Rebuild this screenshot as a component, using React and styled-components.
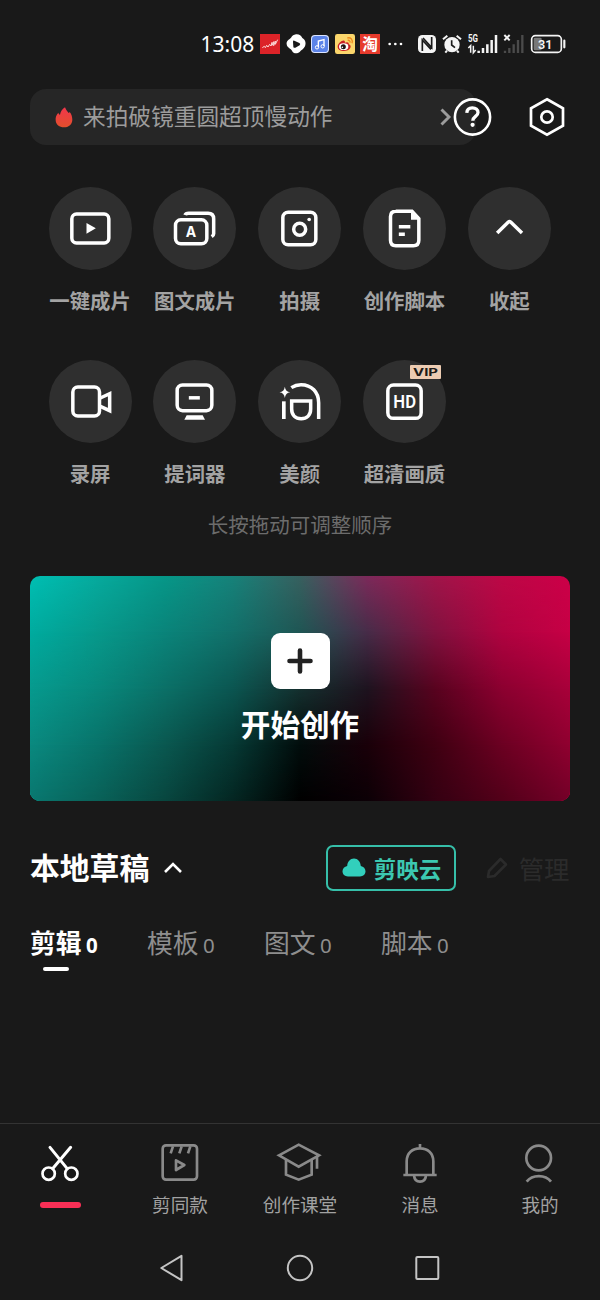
import React, { useState } from "react";
import styled, { createGlobalStyle } from "styled-components";

const GlobalStyle = createGlobalStyle`
  body {
    margin: 0;
    background: #191919;
    font-family: "Noto Sans CJK SC", "Noto Sans", sans-serif;
  }

  * {
    box-sizing: border-box;
  }

  svg {
    display: block;
    flex-shrink: 0;
    overflow: visible;
  }
`;

const Screen = styled.div`
  display: flex;
  flex-direction: column;
  width: 600px;
  height: 1300px;
  background: #191919;
  color: #fff;
  overflow: hidden;
`;

const StatusBar = styled.div`
  display: flex;
  align-items: center;
  gap: 5px;
  height: 89px;
  padding: 0 0 1px 200.5px;
`;

const Clock = styled.span`
  width: 54.5px;
  font-family: "Noto Sans", sans-serif;
  font-size: 21px;
  line-height: 30px;
  white-space: nowrap;
`;

const StatusGroup = styled.div`
  display: flex;
  align-items: center;
  gap: ${props => props.$gap}px;
  margin-left: ${props => props.$left || 0}px;
`;

const TopRow = styled.div`
  display: flex;
  align-items: center;
  height: 56px;
  padding-left: 30px;
`;

const SearchBar = styled.div`
  display: flex;
  align-items: center;
  width: 446px;
  height: 56px;
  padding: 0 24px 0 25px;
  border-radius: 16px;
  background: #262626;
`;

const SearchText = styled.span`
  flex: 1;
  margin-left: 10px;
  padding-bottom: 2px;
  color: #9c9c9c;
  font-size: 22.7px;
  line-height: 32px;
`;

const HelpButton = styled.div`
  margin: 0 36px 0 -24px;
`;

const Actions = styled.div`
  display: grid;
  grid-template-columns: repeat(5, 104.8px);
  row-gap: 43.4px;
  padding: 41.5px 0 0 37.7px;
`;

const ActionItem = styled.div`
  display: flex;
  flex-direction: column;
  align-items: center;
  height: 130px;
`;

const ActionCircle = styled.div`
  position: relative;
  width: 83px;
  height: 83px;
  border-radius: 50%;
  background: #2f2f2f;
`;

const ActionLabel = styled.span`
  margin-top: 15px;
  color: #a3a3a3;
  font-size: 20.4px;
  font-weight: 700;
  line-height: 30px;
  white-space: nowrap;
`;

const VipBadge = styled.div`
  position: absolute;
  top: 5px;
  left: 47px;
  width: 31px;
  height: 14px;
  border-radius: 1px;
  background: #edccb2;
`;

const Hint = styled.p`
  margin: 19px 0 0;
  color: #6c6c6c;
  font-size: 20.5px;
  line-height: 30px;
  text-align: center;
`;

const CreateCard = styled.div`
  position: relative;
  display: flex;
  flex-direction: column;
  align-items: center;
  width: 540px;
  height: 225px;
  margin: 37.4px 30px 0;
  padding-top: 56.5px;
  border-radius: 10px;
  overflow: hidden;
`;

const ColorBand = styled.div`
  position: absolute;
  inset: 0;
  background: linear-gradient(to right, ${props => props.$colors.join(", ")});
  mask-image: ${props =>
    props.$index === 0
      ? "none"
      : `linear-gradient(to bottom, transparent ${(props.$index - 1) * 25}%, #000 ${props.$index * 25}%)`};
`;

const PlusTile = styled.div`
  position: relative;
  display: flex;
  align-items: center;
  justify-content: center;
  width: 59px;
  height: 56px;
  border-radius: 9px;
  background: #fff;
`;

const CreateLabel = styled.span`
  position: relative;
  margin-top: 15px;
  font-size: 29.6px;
  font-weight: 700;
  line-height: 40px;
`;

const DraftHeader = styled.div`
  display: flex;
  align-items: center;
  height: 46px;
  margin-top: 43.6px;
  padding-left: 30px;
`;

const DraftTitle = styled.h2`
  margin: 0 14.5px 0 0;
  padding-bottom: 3px;
  font-size: 29.8px;
  font-weight: 700;
  line-height: 43px;
`;

const CloudButton = styled.div`
  display: flex;
  align-items: center;
  gap: 8px;
  width: 130px;
  height: 46px;
  margin-left: 144px;
  padding-left: 14px;
  border: 2px solid #36bfa9;
  border-radius: 7px;
  color: #3cc8b1;
  font-size: 22.5px;
  font-weight: 700;
  line-height: 42px;
`;

const ManageButton = styled.div`
  display: flex;
  align-items: center;
  gap: 11px;
  margin-left: 30px;
  color: #2b2b2b;
  font-size: 25.4px;
  line-height: 44px;
`;

const Tabs = styled.div`
  display: flex;
  padding: 33px 0 0 30px;
`;

const Tab = styled.div`
  position: relative;
  display: flex;
  align-items: flex-start;
  width: 117px;
  height: 47px;
  color: ${props => (props.$active ? "#fff" : "#8e8e8e")};
  font-size: 25.8px;
  font-weight: ${props => (props.$active ? 700 : 400)};
  line-height: 36px;

  &::after {
    content: "";
    position: absolute;
    bottom: 0;
    left: 13px;
    width: 26px;
    height: 4px;
    border-radius: 2px;
    background: ${props => (props.$active ? "#fff" : "transparent")};
  }
`;

const TabCount = styled.span`
  margin: 3px 0 0 4.5px;
  font-family: "Noto Sans", sans-serif;
  font-size: 20.5px;
  font-weight: ${props => (props.$active ? 700 : 400)};
`;

const BottomNav = styled.div`
  display: flex;
  height: 112px;
  margin-top: auto;
  border-top: 1px solid #333;
`;

const NavItem = styled.div`
  display: flex;
  flex-direction: column;
  align-items: center;
  width: 120px;
  padding-top: 18px;
  color: #8a8a8a;
`;

const NavLabel = styled.span`
  margin-top: 4px;
  color: #a2a2a2;
  font-size: 18.6px;
  line-height: 28px;
`;

const NavMarker = styled.div`
  width: 41px;
  height: 6px;
  margin: 15.5px 0 0;
  border-radius: 3px;
  background: #f92f56;
`;

const SystemNav = styled.div`
  display: flex;
  align-items: center;
  height: 65px;
  padding-left: 159px;
`;

const SystemKey = styled.div`
  margin-right: ${props => props.$gap || 0}px;
`;

// rows of the card's colour field, top to bottom, blended into each other
const bands = [
  ["#00bfb3", "#06aa9d", "#069788", "#17827a", "#38605f", "#7c2a5a", "#a0154a", "#bd0846", "#cc0048"],
  ["#00ab9f", "#07998b", "#0a847a", "#12706a", "#1f5654", "#472c48", "#80123f", "#b00340", "#c60045"],
  ["#069a8e", "#08887c", "#0b7067", "#0b5651", "#15302f", "#1e131f", "#58031f", "#8c0030", "#a8003a"],
  ["#0a897f", "#08736a", "#0a5850", "#063a35", "#020d0c", "#1a0009", "#3f0012", "#6c0022", "#900030"],
  ["#09776f", "#096158", "#08463f", "#042622", "#000000", "#0c0006", "#340012", "#520019", "#740028"]
];

function ActionIcon({ children }) {
  return (
    <svg
      width="83"
      height="83"
      viewBox="0 0 249 249"
      fill="none"
      stroke="#fff"
      strokeWidth="10.5"
    >
      {children}
    </svg>
  );
}

const actions = [
  {
    label: "一键成片",
    icon: (
      <>
        <rect x="68.5" y="81" width="111" height="87" rx="14" />
        <path d="M112.5 108L140.5 124L112.5 140Z" fill="#fff" stroke="none" />
      </>
    )
  },
  {
    label: "图文成片",
    icon: (
      <>
        <rect x="67.5" y="98.5" width="94" height="72" rx="16" />
        <path d="M96 84Q98 78.5 107 78.5H165Q182 78.5 182 95V140Q182 145 176 149" />
        <text
          x="114"
          y="151"
          fill="#fff"
          stroke="none"
          fontFamily="Inter, sans-serif"
          fontSize="42"
          fontWeight="700"
          textAnchor="middle"
        >
          A
        </text>
      </>
    )
  },
  {
    label: "拍摄",
    icon: (
      <>
        <rect x="74.5" y="75.5" width="99" height="98" rx="16" />
        <circle cx="125" cy="126.5" r="18" />
        <circle cx="153.5" cy="97.5" r="5.5" fill="#fff" stroke="none" />
      </>
    )
  },
  {
    label: "创作脚本",
    icon: (
      <>
        <path d="M98 72.5H147L167.5 95V160Q167.5 176.5 151 176.5H98.5Q82.5 176.5 82.5 160V88.5Q82.5 72.5 98.5 72.5Z" />
        <path d="M144 70V98.5H171Z" fill="#fff" stroke="none" />
        <path d="M107.5 119H142M107.5 141.5H125.5" />
      </>
    )
  },
  {
    label: "收起",
    icon: <path d="M87.5 138L121 105Q124.5 102 128 105L162 138" />
  },
  {
    label: "录屏",
    icon: (
      <>
        <rect x="71.5" y="81" width="80" height="87" rx="15" />
        <path d="M154 114L182 101V152L154 139" />
      </>
    )
  },
  {
    label: "提词器",
    icon: (
      <>
        <rect x="72.5" y="75" width="104" height="77" rx="16" />
        <path d="M107.5 113.5H140.5" />
        <path d="M101 166H149L156 179H94Z" fill="#fff" stroke="none" />
      </>
    )
  },
  {
    label: "美颜",
    icon: (
      <>
        <path
          d="M80.5 80Q82.5 95 96.5 97Q82.5 99 80.5 114Q78.5 99 64.5 97Q78.5 95 80.5 80Z"
          fill="#fff"
          stroke="none"
        />
        <path d="M77.5 124V177" strokeWidth="11" />
        <path d="M101 123H158V147C158 166 146 176 129.5 176S101 166 101 147Z" />
        <path d="M100 83C109 77 118 74 129 74C161 74 182 97 182 128V177" />
      </>
    )
  },
  {
    label: "超清画质",
    vip: true,
    icon: (
      <>
        <rect x="74.5" y="75" width="100" height="100" rx="17" />
        <text
          x="91"
          y="145"
          fill="#fff"
          stroke="none"
          fontFamily="Roboto, sans-serif"
          fontSize="57"
          fontWeight="600"
          textLength="68"
          lengthAdjust="spacingAndGlyphs"
        >
          HD
        </text>
      </>
    )
  }
];

const tabs = ["剪辑", "模板", "图文", "脚本"];

function StatusIcons() {
  return (
    <>
      <StatusGroup $gap={5.5}>
        <svg width="20" height="20" viewBox="0 0 60 60">
          <rect width="60" height="60" fill="#dc2328" />
          <path
            d="M7 41L13 37L16 41L20 34L24 39L29 31L33 36L36 25V34L41 23V35L46 21V31L53 17"
            fill="none"
            stroke="#fbd9d7"
            strokeWidth="3"
          />
        </svg>
        <svg width="20" height="20" viewBox="0 0 60 60">
          <path
            d="M30 1C39 0 46 5 49 12C58 17 61 27 57 37C53 46 46 48 41 54C34 60 22 60 18 50C15 44 3 42 2 31C0 21 9 17 15 11C19 5 23 2 30 1Z"
            fill="#fff"
          />
          <path d="M25 20L40 27Q45 30 41 34L28 41Q23 43 22 38L21 23Q21 18 25 20Z" fill="#191919" />
        </svg>
        <svg width="18" height="18" viewBox="0 0 54 54">
          <rect width="54" height="54" rx="11" fill="#dbe4ff" />
          <rect x="3" y="3" width="48" height="48" rx="10" fill="#5b83e8" />
          <path d="M22 37V18L39 14V33" fill="none" stroke="#fff" strokeWidth="4" />
          <circle cx="18" cy="37" r="5" fill="none" stroke="#fff" strokeWidth="3" />
          <circle cx="35" cy="34" r="5" fill="none" stroke="#fff" strokeWidth="3" />
        </svg>
        <svg width="20" height="20" viewBox="0 0 60 60">
          <rect width="60" height="60" rx="7" fill="#fbd66b" />
          <path
            d="M8 38C8 28 22 17 28 20C31 22 29 25 30 26C36 23 43 24 41 31C48 33 49 40 43 46C34 54 8 53 8 38Z"
            fill="#c91f24"
          />
          <ellipse cx="26" cy="38" rx="14" ry="10" fill="#fff" />
          <circle cx="25" cy="38" r="7.5" fill="#201515" />
          <circle cx="22" cy="40" r="2.5" fill="#fff" />
          <path d="M37 12C47 9 55 18 51 28M38 19C43 18 46 22 45 26" fill="none" stroke="#ef8a1d" strokeWidth="4" />
        </svg>
        <svg width="20" height="20" viewBox="0 0 60 60">
          <rect width="60" height="60" fill="#e63a2c" />
          <text
            x="30"
            y="47"
            fill="#fff"
            fontFamily="Noto Sans CJK SC, sans-serif"
            fontSize="47"
            fontWeight="700"
            textAnchor="middle"
          >
            淘
          </text>
        </svg>
        <svg width="17" height="20" viewBox="0 0 51 60" fill="#fff">
          <circle cx="11" cy="30" r="4" />
          <circle cx="28" cy="30" r="4" />
          <circle cx="45" cy="30" r="4" />
        </svg>
      </StatusGroup>
      <StatusGroup $gap={6.2} $left={10}>
        <svg width="18" height="20" viewBox="0 0 54 60">
          <rect y="3" width="54" height="54" rx="13" fill="#f4f4f4" />
          <path
            d="M13 51V18L39 46M15 12L41 41V9"
            fill="none"
            stroke="#191919"
            strokeWidth="5"
          />
        </svg>
        <svg width="20" height="20" viewBox="0 0 60 60">
          <circle cx="30" cy="32" r="23" fill="#f4f4f4" />
          <path d="M3 16L16 5M57 16L44 5M15 50L10 56M45 50L50 56" stroke="#f4f4f4" strokeWidth="6" />
          <path d="M29 19V33L39 41" fill="none" stroke="#191919" strokeWidth="5" />
        </svg>
        <svg width="30" height="20" viewBox="0 0 90 60">
          <text
            x="0"
            y="25"
            fill="#f4f4f4"
            fontFamily="Roboto, sans-serif"
            fontSize="31"
            fontWeight="700"
            textLength="30"
            lengthAdjust="spacingAndGlyphs"
          >
            5G
          </text>
          <path d="M1 42L8 35V56M16 35V56L23 48" fill="none" stroke="#f4f4f4" strokeWidth="4.5" />
          <path
            d="M32 50V57M45 42V57M58 31V57M71 18V57M84 3V57"
            fill="none"
            stroke="#f4f4f4"
            strokeWidth="7.5"
          />
        </svg>
        <svg width="20" height="20" viewBox="0 0 60 60">
          <path d="M1 3L17 19M17 3L1 19" stroke="#f4f4f4" strokeWidth="6" />
          <path d="M3 50V57M16 42V57M29 31V57M42 18V57M55 3V57" stroke="#4b4b4b" strokeWidth="7" />
        </svg>
        <svg width="37" height="20" viewBox="0 0 111 60">
          <rect x="5" y="5" width="89" height="50" rx="11" fill="none" stroke="#f4f4f4" strokeWidth="5" />
          <rect x="11" y="11" width="24" height="38" rx="4" fill="#777" />
          <path d="M103 20V40" stroke="#f4f4f4" strokeWidth="6.5" strokeLinecap="round" />
          <text
            x="46"
            y="43.5"
            fill="#f4f4f4"
            fontFamily="Roboto, sans-serif"
            fontSize="38"
            fontWeight="600"
            textAnchor="middle"
          >
            31
          </text>
        </svg>
      </StatusGroup>
    </>
  );
}

function Header() {
  return (
    <TopRow>
      <SearchBar>
        <svg width="18" height="21" viewBox="0 0 54 63">
          <defs>
            <linearGradient id="flame" x1="0" y1="0" x2="0" y2="1">
              <stop offset="0" stopColor="#f2364c" />
              <stop offset="1" stopColor="#e34f2c" />
            </linearGradient>
          </defs>
          <path
            d="M30 1C33 9 37 13 41 18C43 17 43 16 44 15C50 22 52 31 52 39C51 54 40 61 27 61C13 61 3 54 2 40C1 31 4 24 10 17C11 20 12 22 15 23C17 14 21 7 30 1Z"
            fill="url(#flame)"
          />
        </svg>
        <SearchText>来拍破镜重圆超顶慢动作</SearchText>
        <svg width="12" height="18" viewBox="0 0 12 18">
          <path d="M1.500 1.5L9 9L1.500 16.5" fill="none" stroke="#9c9c9c" strokeWidth="2.9" />
        </svg>
      </SearchBar>
      <HelpButton>
        <svg width="41" height="40" viewBox="0 0 41 40" fill="none" stroke="#fff">
          <circle cx="20.5" cy="20" r="17.6" strokeWidth="2.6" />
          <path
            d="M14.8 15.8C15 12.3 17.3 10.8 20.3 10.8C23.6 10.8 26 12.7 26 15.5C26 19.5 20.8 19.3 20.8 23.8"
            strokeWidth="3.3"
          />
          <circle cx="20.6" cy="27.8" r="2.1" fill="#fff" stroke="none" />
        </svg>
      </HelpButton>
      <svg width="36" height="40" viewBox="0 0 36 40" fill="none" stroke="#fff" strokeWidth="2.7">
        <path d="M18 2.2L34 11.2V28.8L18 37.8L2 28.8V11.2Z" />
        <circle cx="18" cy="20" r="5.7" />
      </svg>
    </TopRow>
  );
}

function DraftBar() {
  return (
    <DraftHeader>
      <DraftTitle>本地草稿</DraftTitle>
      <svg width="18" height="12" viewBox="0 0 18 12">
        <path d="M1 10L9 2L17 10" fill="none" stroke="#fff" strokeWidth="2.6" />
      </svg>
      <CloudButton>
        <svg width="24" height="19" viewBox="0 0 24 19">
          <path
            d="M6 18.5C2.700 18.5 0.5 16.3 0.5 13.3C0.5 10.6 2.5 8.5 5.2 8C5.4 3.7 8.2 0.5 12 0.5S18.6 3.7 18.8 8C21.5 8.5 23.5 10.6 23.5 13.3C23.5 16.3 21.3 18.5 18 18.5Z"
            fill="#32cfbc"
          />
        </svg>
        剪映云
      </CloudButton>
      <ManageButton>
        <svg width="22" height="22" viewBox="0 0 22 22">
          <path
            d="M2 20L3 14L14.5 2L20 7.5L8.5 19Z"
            fill="none"
            stroke="#2b2b2b"
            strokeWidth="2.6"
            strokeLinejoin="round"
          />
        </svg>
        管理
      </ManageButton>
    </DraftHeader>
  );
}

function NavIcon({ children }) {
  return (
    <svg
      width="46"
      height="44"
      viewBox="0 0 138 132"
      fill="none"
      stroke="currentColor"
      strokeWidth="8"
    >
      {children}
    </svg>
  );
}

function MainNav() {
  return (
    <BottomNav>
      <NavItem>
        <NavIcon>
          <g stroke="#fff">
            <path d="M39 16L90 79M101 16L48 79" strokeWidth="9" strokeLinecap="round" />
            <circle cx="35" cy="95" r="18.5" />
            <circle cx="103" cy="95" r="18.5" />
          </g>
        </NavIcon>
        <NavMarker />
      </NavItem>
      <NavItem>
        <NavIcon>
          <rect x="17" y="10" width="103" height="103" rx="10" />
          <path d="M48 13L41 34M74 13L67 34M100 13L93 34" />
          <path d="M57 55L82 69L57 84Z" strokeLinejoin="round" />
        </NavIcon>
        <NavLabel>剪同款</NavLabel>
      </NavItem>
      <NavItem>
        <NavIcon>
          <path d="M6 40L65 8L126 40L65 74Z" />
          <path d="M27 54V98L65 113L104 98V54M120 43V80" />
        </NavIcon>
        <NavLabel>创作课堂</NavLabel>
      </NavItem>
      <NavItem>
        <NavIcon>
          <path d="M69 6V17M29 98V58C29 33 46 19 69 19S109 33 109 58V98M19 99H119M51 100C52 112 59 119 69 119S86 112 87 100" />
        </NavIcon>
        <NavLabel>消息</NavLabel>
      </NavItem>
      <NavItem>
        <NavIcon>
          <circle cx="65" cy="48" r="37" />
          <path d="M29 119C46 97 85 97 102 119" />
        </NavIcon>
        <NavLabel>我的</NavLabel>
      </NavItem>
    </BottomNav>
  );
}

export default function App() {
  const [active, setActive] = useState("剪辑");

  return (
    <Screen>
      <GlobalStyle />
      <StatusBar>
        <Clock>13:08</Clock>
        <StatusIcons />
      </StatusBar>
      <Header />
      <Actions>
        {actions.map(action => (
          <ActionItem key={action.label}>
            <ActionCircle>
              <ActionIcon>{action.icon}</ActionIcon>
              {action.vip && (
                <VipBadge>
                  <svg width="31" height="14" viewBox="0 0 31 14">
                    <text
                      x="3"
                      y="10.5"
                      fill="#201a17"
                      fontFamily="Inter, sans-serif"
                      fontSize="10"
                      fontWeight="700"
                      textLength="25"
                      lengthAdjust="spacingAndGlyphs"
                    >
                      VIP
                    </text>
                  </svg>
                </VipBadge>
              )}
            </ActionCircle>
            <ActionLabel>{action.label}</ActionLabel>
          </ActionItem>
        ))}
      </Actions>
      <Hint>长按拖动可调整顺序</Hint>
      <CreateCard>
        {bands.map((colors, index) => (
          <ColorBand key={index} $colors={colors} $index={index} />
        ))}
        <PlusTile>
          <svg width="28" height="28" viewBox="0 0 28 28">
            <path d="M14 3.5V24.5M3.5 14H24.5" stroke="#222" strokeWidth="4.6" strokeLinecap="round" />
          </svg>
        </PlusTile>
        <CreateLabel>开始创作</CreateLabel>
      </CreateCard>
      <DraftBar />
      <Tabs>
        {tabs.map(tab => (
          <Tab key={tab} $active={tab === active} onClick={() => setActive(tab)}>
            {tab}
            <TabCount $active={tab === active}>0</TabCount>
          </Tab>
        ))}
      </Tabs>
      <MainNav />
      <SystemNav>
        <SystemKey $gap={103}>
          <svg width="25" height="28" viewBox="0 0 25 28">
            <path
              d="M22.5 1.8V26.2L2.3 14Z"
              fill="none"
              stroke="#c4c4c4"
              strokeWidth="2"
              strokeLinejoin="round"
            />
          </svg>
        </SystemKey>
        <SystemKey $gap={101}>
          <svg width="27" height="28" viewBox="0 0 27 28">
            <circle cx="13" cy="14" r="12.2" fill="none" stroke="#c4c4c4" strokeWidth="2" />
          </svg>
        </SystemKey>
        <SystemKey>
          <svg width="25" height="28" viewBox="0 0 25 28">
            <rect x="1.3" y="3" width="22" height="22" rx="1" fill="none" stroke="#c4c4c4" strokeWidth="2" />
          </svg>
        </SystemKey>
      </SystemNav>
    </Screen>
  );
}
